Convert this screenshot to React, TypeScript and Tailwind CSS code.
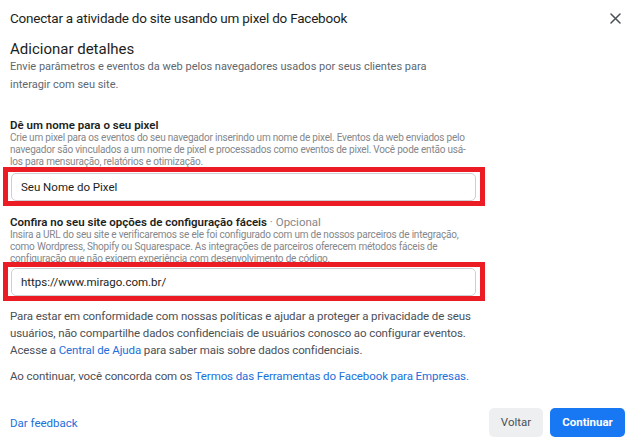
import { useState } from 'react';

function CloseIcon() {
    return (
        <svg width="11" height="11" viewBox="0 0 11 11" fill="none" stroke="#4b4f56" strokeWidth="1.5" strokeLinecap="round">
            <path d="M1 1 L10 10 M10 1 L1 10" />
        </svg>
    );
}

interface HighlightedInputProps {
    value: string;
    onChange: (v: string) => void;
}

function HighlightedInput({ value, onChange }: HighlightedInputProps) {
    return (
        <div className="relative w-[465px] ml-px">
            <input
                value={value}
                onChange={(e) => onChange(e.target.value)}
                className="w-full h-[28px] px-[9px] rounded-[5px] border border-[#ccd0d5] bg-white text-[11.5px] text-[#1c1e21] outline-none"
            />
            {/* Red annotation frame around the field */}
            <div className="absolute -left-[8px] -right-[9px] -top-[6px] -bottom-[5px] border-[5px] border-[#ec1c24] pointer-events-none" />
        </div>
    );
}

export default function App() {
    const [pixelName, setPixelName] = useState('Seu Nome do Pixel');
    const [siteUrl, setSiteUrl] = useState('https://www.mirago.com.br/');

    return (
        <div className="w-[638px] h-[442px] bg-white flex flex-col font-['Roboto','Liberation_Sans',sans-serif] overflow-hidden">
            {/* Header */}
            <div className="flex items-center justify-between h-[36px] pl-[10px] pr-[17px] shrink-0">
                <h1 className="text-[13.5px] tracking-[-0.22px] text-[#1c1e21]">
                    Conectar a atividade do site usando um pixel do Facebook
                </h1>
                <button className="flex items-center justify-center">
                    <CloseIcon />
                </button>
            </div>

            {/* Body */}
            <div className="flex flex-col px-[10px]">
                <h2 className="mt-[4px] text-[15px] leading-[18px] text-[#1c1e21]">Adicionar detalhes</h2>
                <p className="w-[490px] text-[11px] leading-[18px] text-[#606770]">
                    Envie parâmetros e eventos da web pelos navegadores usados por seus clientes para
                    <br />
                    interagir com seu site.
                </p>

                <h3 className="mt-[24px] text-[11.5px] leading-[14px] font-semibold text-[#1c1e21]">
                    Dê um nome para o seu pixel
                </h3>
                <p className="w-[490px] text-[10px] leading-[12px] tracking-[-0.2px] text-[#84878b]">
                    Crie um pixel para os eventos do seu navegador inserindo um nome de pixel. Eventos da web enviados pelo
                    <br />
                    navegador são vinculados a um nome de pixel e processados como eventos de pixel. Você pode então usá-
                    <br />
                    los para mensuração, relatórios e otimização.
                </p>
                <div className="mt-[5px]">
                    <HighlightedInput value={pixelName} onChange={setPixelName} />
                </div>

                <h3 className="mt-[14px] text-[11.5px] leading-[14px] text-[#1c1e21]">
                    <span className="font-semibold">Confira no seu site opções de configuração fáceis</span>
                    <span className="text-[#84878b]"> · Opcional</span>
                </h3>
                <p className="w-[490px] text-[10px] leading-[12px] tracking-[-0.2px] text-[#84878b]">
                    Insira a URL do seu site e verificaremos se ele foi configurado com um de nossos parceiros de integração,
                    <br />
                    como Wordpress, Shopify ou Squarespace. As integrações de parceiros oferecem métodos fáceis de
                    <br />
                    configuração que não exigem experiência com desenvolvimento de código.
                </p>
                <div className="mt-[3px]">
                    <HighlightedInput value={siteUrl} onChange={setSiteUrl} />
                </div>

                <p className="mt-[12px] w-[490px] text-[11.5px] leading-[17px] tracking-[-0.1px] text-[#4b4f56]">
                    Para estar em conformidade com nossas políticas e ajudar a proteger a privacidade de seus
                    <br />
                    usuários, não compartilhe dados confidenciais de usuários conosco ao configurar eventos.
                    <br />
                    Acesse a <a className="text-[#216fdb]">Central de Ajuda</a> para saber mais sobre dados confidenciais.
                </p>
                <p className="mt-[9px] text-[11.5px] leading-[17px] tracking-[-0.1px] text-[#4b4f56]">
                    Ao continuar, você concorda com os{' '}
                    <a className="text-[#216fdb]">Termos das Ferramentas do Facebook para Empresas.</a>
                </p>
            </div>

            {/* Footer */}
            <div className="mt-auto mb-[5px] flex items-center justify-between pl-[10px] pr-[13px]">
                <a className="mt-[3px] text-[11.5px] text-[#216fdb]">Dar feedback</a>
                <div className="flex gap-[7px]">
                    <button className="w-[54px] h-[29px] rounded-[5px] bg-[#eeeff1] text-[11.5px] text-[#4b4f56]">
                        Voltar
                    </button>
                    <button className="w-[75px] h-[29px] rounded-[5px] bg-[#1877f2] text-[11.5px] font-bold text-white">
                        Continuar
                    </button>
                </div>
            </div>
        </div>
    );
}
